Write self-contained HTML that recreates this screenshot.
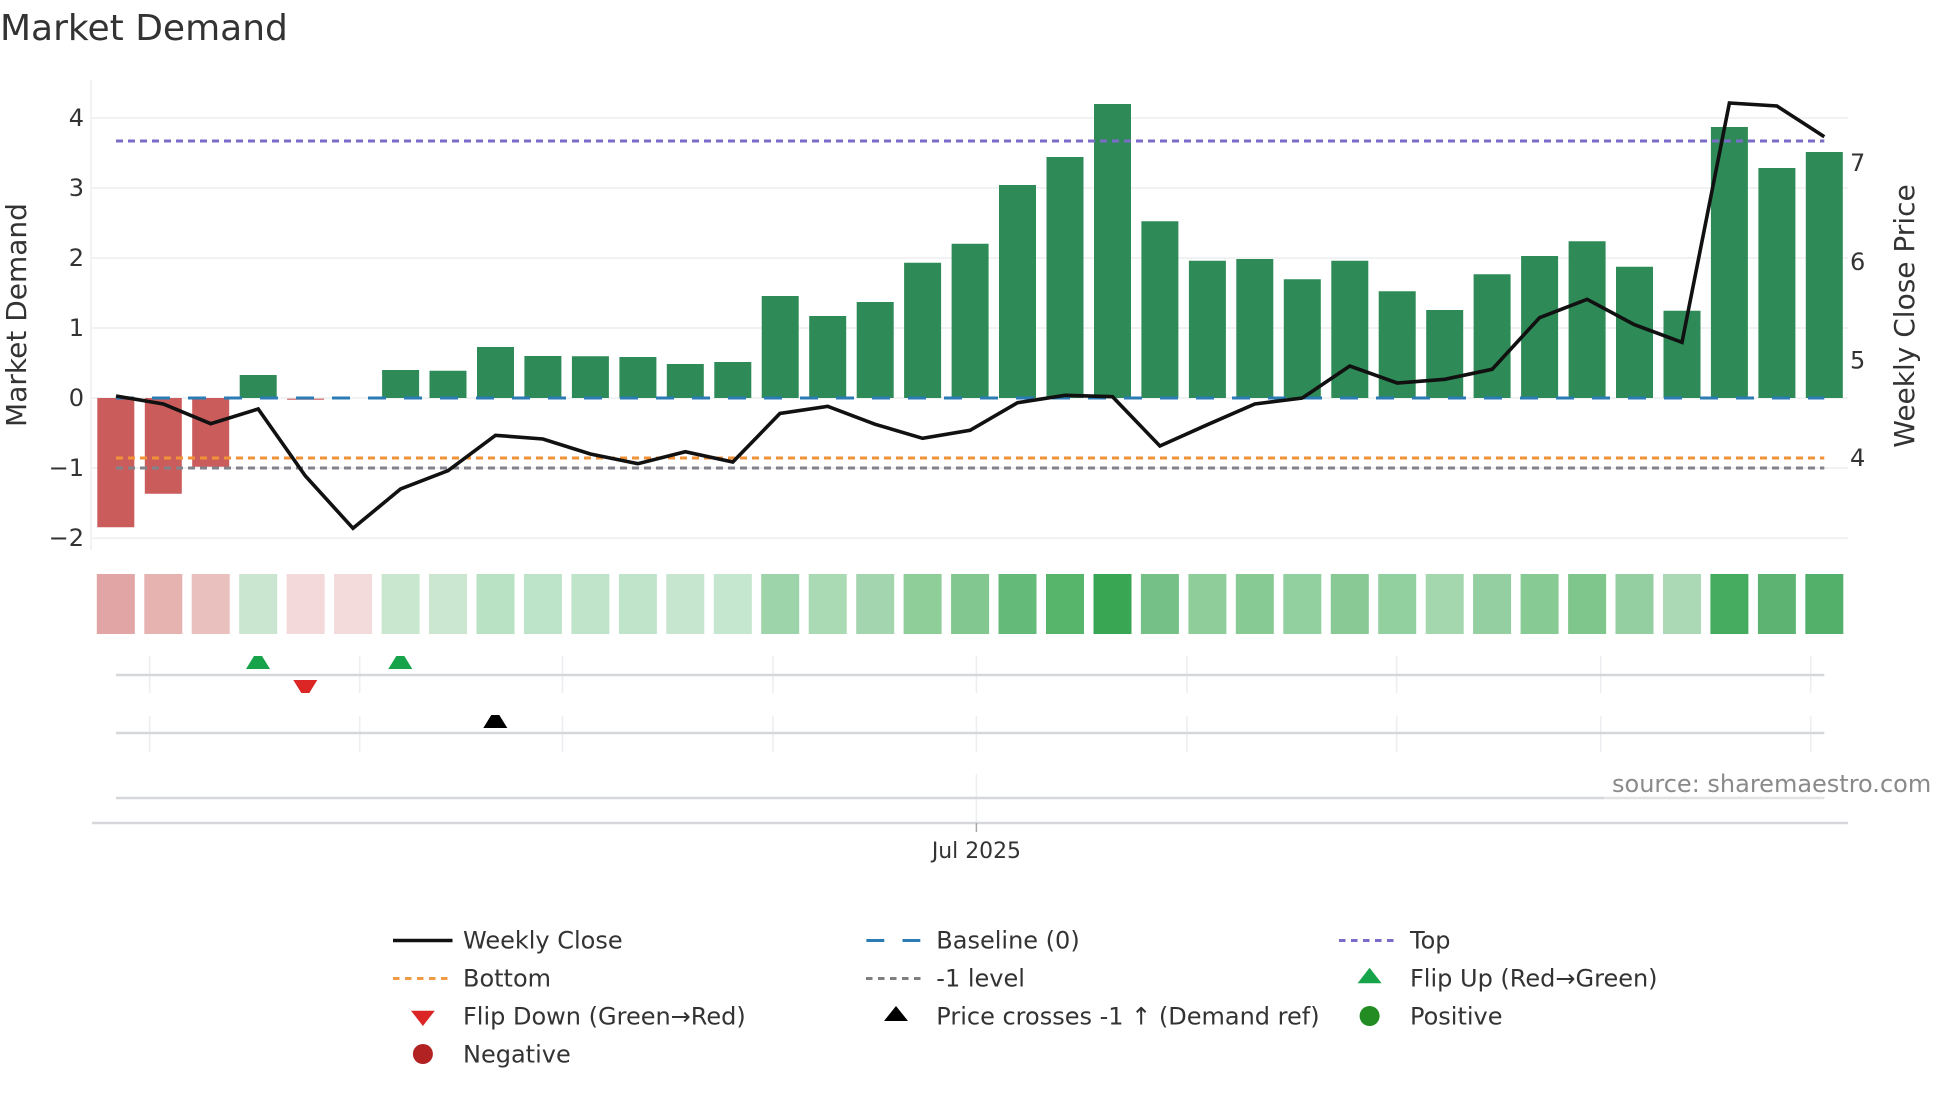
<!DOCTYPE html>
<html><head><meta charset="utf-8"><title>Market Demand</title>
<style>
html,body{margin:0;padding:0;background:#fff;width:1960px;height:1102px;overflow:hidden}
svg{display:block}
text{font-family:"DejaVu Sans","Liberation Sans",sans-serif;fill:#333}
.t{font-size:24px}
.l{font-size:24px}
</style></head><body>
<svg width="1960" height="1102" viewBox="0 0 1960 1102" xmlns="http://www.w3.org/2000/svg">
<rect width="1960" height="1102" fill="#fff"/>
<text x="0" y="40" style="font-size:36px">Market Demand</text>

<!-- grid -->
<g stroke="#f1f2f4" stroke-width="2" fill="none">
<path d="M91 80V550"/>
<path d="M91 118H1848M91 188H1848M91 258H1848M91 328H1848M91 398H1848M91 468H1848M91 538.3H1848"/>
</g>

<!-- bars -->
<g fill="#cb5c5c">
<path d="M97.3 398h37v129.3h-37z"/>
<path d="M144.8 398h37v95.7h-37z"/>
<path d="M192.2 398h37v68.7h-37z"/>
<path d="M287.1 398.6h37v1.2h-37z"/>
</g>
<g fill="#2e8b57">
<path d="M239.7 375h37V398h-37z"/>
<path d="M382.1 370h37V398h-37z"/>
<path d="M429.5 370.7h37V398h-37z"/>
<path d="M477 347h37V398h-37z"/>
<path d="M524.4 356h37V398h-37z"/>
<path d="M571.9 356.3h37V398h-37z"/>
<path d="M619.4 357h37V398h-37z"/>
<path d="M666.8 364h37V398h-37z"/>
<path d="M714.3 362h37V398h-37z"/>
<path d="M761.7 296h37V398h-37z"/>
<path d="M809.2 316h37V398h-37z"/>
<path d="M856.7 302h37V398h-37z"/>
<path d="M904.1 262.7h37V398h-37z"/>
<path d="M951.6 243.7h37V398h-37z"/>
<path d="M999 185h37V398h-37z"/>
<path d="M1046.5 157h37V398h-37z"/>
<path d="M1094 104h37V398h-37z"/>
<path d="M1141.4 221.3h37V398h-37z"/>
<path d="M1188.9 260.7h37V398h-37z"/>
<path d="M1236.3 259h37V398h-37z"/>
<path d="M1283.8 279.3h37V398h-37z"/>
<path d="M1331.3 260.7h37V398h-37z"/>
<path d="M1378.7 291.3h37V398h-37z"/>
<path d="M1426.2 310h37V398h-37z"/>
<path d="M1473.6 274.3h37V398h-37z"/>
<path d="M1521.1 256h37V398h-37z"/>
<path d="M1568.6 241.3h37V398h-37z"/>
<path d="M1616 266.7h37V398h-37z"/>
<path d="M1663.5 310.7h37V398h-37z"/>
<path d="M1710.9 127h37V398h-37z"/>
<path d="M1758.4 168h37V398h-37z"/>
<path d="M1805.8 152h37V398h-37z"/>
</g>

<!-- reference lines -->
<g fill="none" stroke-width="3">
<path d="M116 398H1824.3" stroke="#2b7bb4" stroke-dasharray="18 18"/>
<path d="M116 141H1824.3" stroke="#7a6bc9" stroke-dasharray="7 5"/>
<path d="M116 458H1824.3" stroke="#f29238" stroke-dasharray="7 5"/>
<path d="M116 468H1824.3" stroke="#82828a" stroke-dasharray="7 5"/>
</g>

<!-- price line -->
<path fill="none" stroke="#111" stroke-width="3.6" stroke-linejoin="miter" d="M116 396L163.3 404L210.7 423.7L258.2 409L305.4 476L353 528.3L400.6 489L448 470.7L495.5 435.3L542.9 439L590.4 454L637.9 463.7L685.3 451.7L732.8 462L779.9 413.5L827.7 406.3L875.2 424.3L922.6 438.3L970.1 430.3L1017.5 402.7L1065 395.3L1112.5 396.7L1159.9 446L1207.4 424.7L1254.8 404L1302.3 398L1349.8 366L1397.2 383L1444.7 379.3L1492.1 369.3L1539.6 317.7L1587.1 299.3L1634.5 324.7L1682 342.3L1729.4 103L1776.9 106L1824.3 136.7"/>

<!-- tick labels -->
<g class="t" text-anchor="end">
<text x="84" y="126">4</text>
<text x="84" y="196">3</text>
<text x="84" y="266">2</text>
<text x="84" y="336">1</text>
<text x="84" y="406">0</text>
<text x="84" y="476">−1</text>
<text x="84" y="546">−2</text>
</g>
<g class="t">
<text x="1850" y="171">7</text>
<text x="1850" y="270">6</text>
<text x="1850" y="368.5">5</text>
<text x="1850" y="466">4</text>
</g>
<text transform="translate(26 315) rotate(-90)" text-anchor="middle" style="font-size:28px">Market Demand</text>
<text transform="translate(1914 316) rotate(-90)" text-anchor="middle" style="font-size:28px">Weekly Close Price</text>

<!-- heat strip -->
<g>
<path fill="#e1a5a5" d="M96.8 574h38v60h-38z"/>
<path fill="#e6b3b1" d="M144.3 574h38v60h-38z"/>
<path fill="#e9c0bd" d="M191.7 574h38v60h-38z"/>
<path fill="#cae6d0" d="M239.2 574h38v60h-38z"/>
<path fill="#f3d9da" d="M286.6 574h38v60h-38z"/>
<path fill="#f2dbda" d="M334.1 574h38v60h-38z"/>
<path fill="#c9e6ce" d="M381.6 574h38v60h-38z"/>
<path fill="#cbe7d1" d="M429 574h38v60h-38z"/>
<path fill="#b9e1c4" d="M476.5 574h38v60h-38z"/>
<path fill="#bde3c8" d="M523.9 574h38v60h-38z"/>
<path fill="#c0e4ca" d="M571.4 574h38v60h-38z"/>
<path fill="#c0e4ca" d="M618.9 574h38v60h-38z"/>
<path fill="#c6e6d0" d="M666.3 574h38v60h-38z"/>
<path fill="#c5e7cf" d="M713.8 574h38v60h-38z"/>
<path fill="#9dd4a9" d="M761.2 574h38v60h-38z"/>
<path fill="#a9dab3" d="M808.7 574h38v60h-38z"/>
<path fill="#a3d6ae" d="M856.2 574h38v60h-38z"/>
<path fill="#8fcd99" d="M903.6 574h38v60h-38z"/>
<path fill="#82c78f" d="M951.1 574h38v60h-38z"/>
<path fill="#64ba78" d="M998.5 574h38v60h-38z"/>
<path fill="#57b56b" d="M1046 574h38v60h-38z"/>
<path fill="#38a653" d="M1093.5 574h38v60h-38z"/>
<path fill="#75c086" d="M1140.9 574h38v60h-38z"/>
<path fill="#8fcd9b" d="M1188.4 574h38v60h-38z"/>
<path fill="#88ca94" d="M1235.8 574h38v60h-38z"/>
<path fill="#93d0a0" d="M1283.3 574h38v60h-38z"/>
<path fill="#89c996" d="M1330.8 574h38v60h-38z"/>
<path fill="#93d0a0" d="M1378.2 574h38v60h-38z"/>
<path fill="#a5d7af" d="M1425.7 574h38v60h-38z"/>
<path fill="#93cfa0" d="M1473.1 574h38v60h-38z"/>
<path fill="#88ca94" d="M1520.6 574h38v60h-38z"/>
<path fill="#7fc68d" d="M1568.1 574h38v60h-38z"/>
<path fill="#93cfa0" d="M1615.5 574h38v60h-38z"/>
<path fill="#abd8b5" d="M1663 574h38v60h-38z"/>
<path fill="#46ac60" d="M1710.4 574h38v60h-38z"/>
<path fill="#5db472" d="M1757.9 574h38v60h-38z"/>
<path fill="#52b06a" d="M1805.3 574h38v60h-38z"/>
</g>

<!-- event rows -->
<g stroke="#eceef1" stroke-width="1.5" fill="none">
<path d="M149.7 656V693M359.7 656V693M562.5 656V693M773 656V693M976.4 656V693M1186.9 656V693M1396.7 656V693M1600.7 656V693M1810.7 656V693"/>
<path d="M149.7 716V752M359.7 716V752M562.5 716V752M773 716V752M976.4 716V752M1186.9 716V752M1396.7 716V752M1600.7 716V752M1810.7 716V752"/>
<path d="M976.4 774V823"/>
</g>
<g stroke="#d5d7da" stroke-width="2.4" fill="none">
<path d="M116 675H1824.3M116 733H1824.3M116 798H1824.3"/>
<path d="M92 823H1848"/>
</g>
<path d="M976.4 823V832" stroke="#a8a8a8" stroke-width="1.5"/>
<path fill="#16a34a" d="M246 669L254 656H262L270 669z"/>
<path fill="#16a34a" d="M388.3 669L396.3 656H404.3L412.3 669z"/>
<path fill="#dc2626" d="M293.3 680H317.3L309.3 693H301.3z"/>
<path fill="#000" d="M483.3 728L491.3 715H499.3L507.3 728z"/>

<text x="976.4" y="858" text-anchor="middle" style="font-size:21.9px">Jul 2025</text>

<!-- source -->
<rect x="1604" y="768" width="356" height="33" fill="#fff" opacity=".3"/>
<text x="1612" y="792" style="font-size:24px;fill:#8a8a8a">source: sharemaestro.com</text>

<!-- legend -->
<path d="M393 940.5H452.5" stroke="#111" stroke-width="3.6" fill="none"/>
<text class="l" x="463" y="948.5">Weekly Close</text>
<path d="M393 978.5H449" stroke="#ef9a45" stroke-width="3" stroke-dasharray="6.5 5.5" fill="none"/>
<text class="l" x="463" y="986.5">Bottom</text>
<path fill="#dc2626" d="M411 1010.7H434.8L422.9 1026z"/>
<text class="l" x="463" y="1024.5">Flip Down (Green→Red)</text>
<circle cx="422.9" cy="1054" r="10" fill="#b22222"/>
<text class="l" x="463" y="1062.5">Negative</text>

<path d="M866.4 940.5H884.3M902.5 940.5H920.3" stroke="#2b7bb4" stroke-width="3" fill="none"/>
<text class="l" x="936.3" y="948.5">Baseline (0)</text>
<path d="M866 978.5H922" stroke="#7f7f7f" stroke-width="3" stroke-dasharray="6.5 5.5" fill="none"/>
<text class="l" x="936.3" y="986.5">-1 level</text>
<path fill="#000" d="M884 1021H908L896 1006z"/>
<text class="l" x="936.3" y="1024.5">Price crosses -1 ↑ (Demand ref)</text>

<path d="M1339 940.5H1395" stroke="#7a6bc9" stroke-width="3" stroke-dasharray="6.5 5.5" fill="none"/>
<text class="l" x="1410" y="948.5">Top</text>
<path fill="#16a34a" d="M1357.6 983.3H1381.6L1369.6 967.7z"/>
<text class="l" x="1410" y="986.5">Flip Up (Red→Green)</text>
<circle cx="1369.6" cy="1016" r="10" fill="#228b22"/>
<text class="l" x="1410" y="1024.5">Positive</text>
</svg>
</body></html>
